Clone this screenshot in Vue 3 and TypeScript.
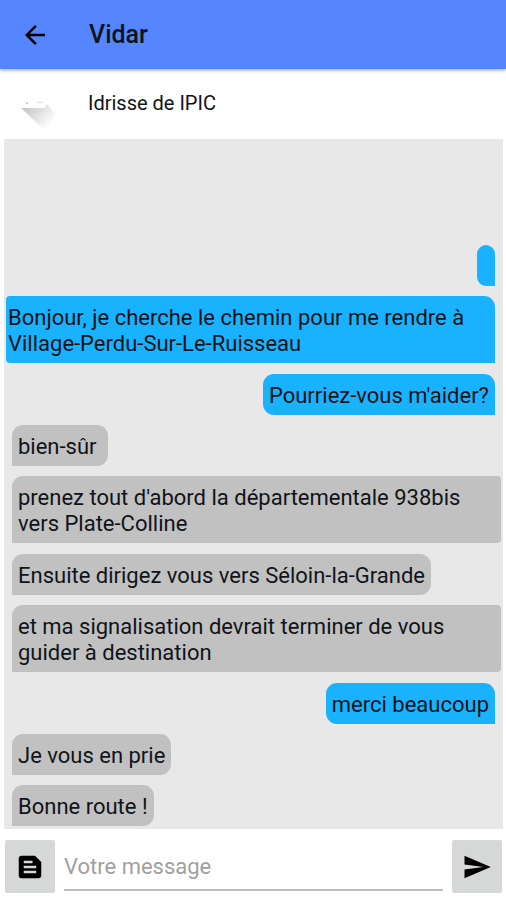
<script setup lang="ts">
import { ref } from 'vue'

interface Message {
  id: number
  text: string
  mine: boolean
  wide?: boolean
}

const messages = ref<Message[]>([
  { id: 1, text: '', mine: true },
  { id: 2, text: 'Bonjour, je cherche le chemin pour me rendre à Village-Perdu-Sur-Le-Ruisseau', mine: true, wide: true },
  { id: 3, text: "Pourriez-vous m'aider?", mine: true },
  { id: 4, text: 'bien-sûr ', mine: false },
  { id: 5, text: "prenez tout d'abord la départementale 938bis vers Plate-Colline", mine: false, wide: true },
  { id: 6, text: 'Ensuite dirigez vous vers Séloin-la-Grande', mine: false },
  { id: 7, text: 'et ma signalisation devrait terminer de vous guider à destination', mine: false, wide: true },
  { id: 8, text: 'merci beaucoup', mine: true },
  { id: 9, text: 'Je vous en prie', mine: false },
  { id: 10, text: 'Bonne route !', mine: false },
])

const draft = ref('')

function send(): void {
  const text = draft.value.trim()
  if (!text) return
  messages.value.push({ id: messages.value.length + 1, text, mine: true })
  draft.value = ''
}
</script>

<template>
  <div class="screen">
    <header class="bar">
      <button class="back" type="button" aria-label="Retour">
        <svg viewBox="0 0 24 24" width="30" height="30" aria-hidden="true">
          <path d="M20 11H7.83l5.59-5.59L12 4l-8 8 8 8 1.41-1.41L7.83 13H20v-2z" />
        </svg>
      </button>
      <h1>Vidar</h1>
    </header>

    <section class="contact">
      <svg class="avatar" viewBox="0 0 40 36" width="40" height="36" aria-hidden="true">
        <defs>
          <linearGradient id="fade" x1="0.1" y1="0.1" x2="0.9" y2="0.6">
            <stop offset="0" stop-color="#c4c4c4" />
            <stop offset="0.5" stop-color="#dedede" />
            <stop offset="1" stop-color="#fafafa" />
          </linearGradient>
        </defs>
        <path d="M0 11Q1 12 2 12H25L27 8L36 19L25 33Q22 32 20 30Z" fill="url(#fade)" />
        <circle cx="7" cy="7" r="1" fill="#bdbdbd" />
        <path d="M17 7q3-2 6 0" fill="none" stroke="#dcdcdc" />
      </svg>
      <h2>Idrisse de IPIC</h2>
    </section>

    <main class="messages">
      <p
        v-for="message in messages"
        :key="message.id"
        class="bubble"
        :class="{ mine: message.mine, wide: message.wide }"
      >{{ message.text }}</p>
    </main>

    <form class="composer" @submit.prevent="send">
      <button class="action" type="button" aria-label="Messages enregistrés">
        <svg viewBox="0 0 24 24" width="30" height="30" aria-hidden="true">
          <path fill-rule="evenodd" d="M16 3H5c-1.1 0-2 .9-2 2v14c0 1.100.9 2 2 2h14c1.100 0 2-.9 2-2V8l-5-5zM7 7h7v2H7V7zm10 10H7v-2h10v2zm0-4H7v-2h10v2z" />
        </svg>
      </button>
      <input v-model="draft" type="text" placeholder="Votre message" aria-label="Votre message" />
      <button class="action" type="submit" aria-label="Envoyer">
        <svg viewBox="0 0 24 24" width="30" height="30" aria-hidden="true">
          <path d="M2.010 21L23 12 2.010 3 2 10l15 2-15 2z" />
        </svg>
      </button>
    </form>
  </div>
</template>

<style>
body {
  margin: 0;
  background: #fff;
}
</style>

<style scoped>
.screen {
  display: flex;
  flex-direction: column;
  min-height: 100vh;
  color: #101418;
  font-family: Roboto, "Liberation Sans", sans-serif;
}

.bar {
  display: flex;
  align-items: center;
  gap: 39px;
  height: 69px;
  padding: 1px 20px 0;
  box-sizing: border-box;
  background: #5586ff;
  box-shadow: 0 1px 4px rgba(0, 0, 0, 0.4);
}

.back {
  display: flex;
  padding: 0;
  border: 0;
  background: none;
}

h1,
h2 {
  margin: 0;
}

h1 {
  font-size: 25px;
  font-weight: 500;
  line-height: 32px;
}

.contact {
  display: flex;
  align-items: flex-start;
  gap: 28px;
  height: 70px;
  padding: 21px 20px 0;
  box-sizing: border-box;
}

.avatar {
  padding-top: 6px;
}

h2 {
  font-size: 20px;
  font-weight: 400;
  line-height: 26px;
}

.messages {
  display: flex;
  flex: 1;
  flex-direction: column;
  align-items: flex-start;
  justify-content: flex-end;
  gap: 10px;
  margin: 0 3px 0 4px;
  padding: 0 8px 3px;
  background: #e8e8e8;
}

.bubble {
  min-width: 18px;
  min-height: 41px;
  margin: 0;
  padding: 9px 6px 6px;
  box-sizing: border-box;
  border-radius: 11px 11px 11px 0;
  background: #c1c1c1;
  font-size: 22px;
  line-height: 26px;
  white-space: break-spaces;
}

.bubble.wide {
  margin: 0 -6px 1px 0;
  border-radius: 11px 4px 4px 0;
}

.bubble.mine {
  align-self: flex-end;
  border-radius: 11px 11px 0 11px;
  background: #19b2ff;
}

.bubble.mine.wide {
  align-self: stretch;
  margin: 0 0 1px -6px;
  padding: 9px 2px 6px;
  border-radius: 4px 11px 0 4px;
}

.composer {
  display: flex;
  gap: 9px;
  padding: 11px 4px 7px 5px;
}

.action {
  display: flex;
  flex: none;
  align-items: center;
  justify-content: center;
  width: 50px;
  height: 53px;
  padding: 0;
  border: 0;
  border-radius: 2px;
  background: #d6d8d7;
}

input {
  flex: 1;
  min-width: 0;
  height: 51px;
  padding: 4px 0 0;
  box-sizing: border-box;
  border: 0;
  border-bottom: 2px solid #bcbcbc;
  outline: 0;
  background: none;
  color: inherit;
  font: inherit;
  font-size: 22px;
}

input::placeholder {
  color: #a0a0a0;
  opacity: 1;
}
</style>
